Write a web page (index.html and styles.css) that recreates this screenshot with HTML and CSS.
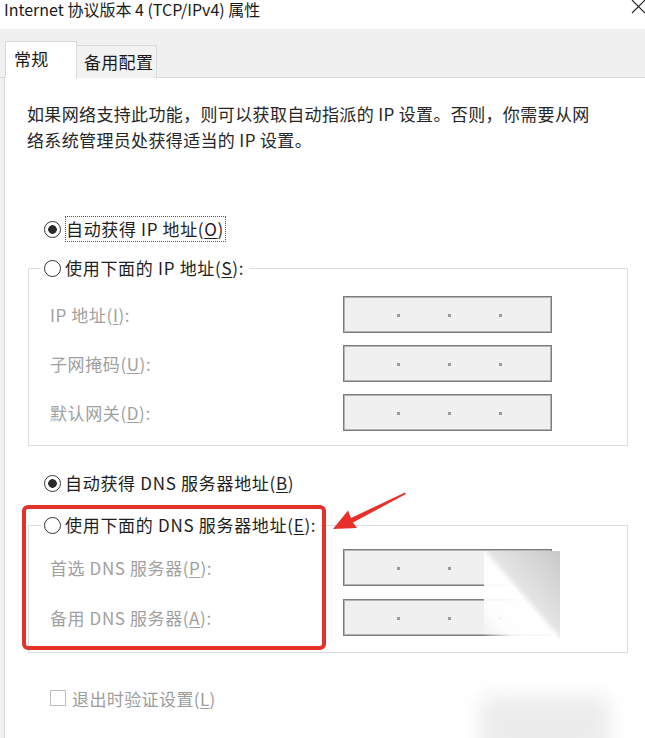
FILE: index.html
```html
<!DOCTYPE html>
<html lang="zh-CN">
<head>
<meta charset="utf-8">
<title>Internet 协议版本 4 (TCP/IPv4) 属性</title>
<link rel="stylesheet" href="styles.css">
</head>
<body>
<div class="titlebar">
  <div class="title">Internet 协议版本 4 (TCP/IPv4) 属性</div>
  <svg class="close" width="14" height="14" viewBox="0 0 14 14"><path d="M1 0 L14 13 M14 0 L1 13" stroke="#222" stroke-width="1.1" fill="none"/></svg>
</div>
<div class="tabstrip">
  <div class="tab active">常规</div>
  <div class="tab">备用配置</div>
</div>
<div class="window">
  <div class="panel">
    <p class="desc">如果网络支持此功能，则可以获取自动指派的 IP 设置。否则，你需要从网<br>络系统管理员处获得适当的 IP 设置。</p>

    <div class="radio-row first">
      <span class="radio checked"></span><span class="focus">自动获得 IP 地址(<u>O</u>)</span>
    </div>

    <fieldset class="group ip">
      <legend class="legend"><span class="radio"></span><span class="lbl">使用下面的 IP 地址(<u>S</u>):</span></legend>
      <div class="field"><span class="flabel">IP 地址(<u>I</u>):</span><span class="ipbox"><i></i><i></i><i></i></span></div>
      <div class="field"><span class="flabel">子网掩码(<u>U</u>):</span><span class="ipbox"><i></i><i></i><i></i></span></div>
      <div class="field"><span class="flabel">默认网关(<u>D</u>):</span><span class="ipbox"><i></i><i></i><i></i></span></div>
    </fieldset>

    <div class="radio-row dns-auto">
      <span class="radio checked"></span><span class="lbl">自动获得 DNS 服务器地址(<u>B</u>)</span>
    </div>

    <fieldset class="group dns">
      <legend class="legend"><span class="radio"></span><span class="lbl">使用下面的 DNS 服务器地址(<u>E</u>):</span></legend>
      <div class="field"><span class="flabel">首选 DNS 服务器(<u>P</u>):</span><span class="ipbox"><i></i><i></i><i></i></span></div>
      <div class="field"><span class="flabel">备用 DNS 服务器(<u>A</u>):</span><span class="ipbox"><i></i><i></i><i></i></span></div>
    </fieldset>

    <div class="check-row">
      <span class="checkbox"></span><span class="clabel">退出时验证设置(<u>L</u>)</span>
    </div>
  </div>
</div>

<div class="highlight"></div>
<svg class="arrow" width="645" height="738" viewBox="0 0 645 738">
  <polygon points="333,529 348,510.5 351,518 405,492.5 406,494 353,522.5 357,528" fill="#e8302a"/>
</svg>
<div class="wm-tri"></div>
<div class="wm-blob"></div>
</body>
</html>
```

FILE: styles.css
```css
* { box-sizing: border-box; }

html, body {
  margin: 0;
  padding: 0;
}

body {
  width: 645px;
  height: 738px;
  overflow: hidden;
  position: relative;
  background: #ffffff;
  font-family: "Noto Sans CJK SC", "Microsoft YaHei", "Noto Sans", sans-serif;
  font-size: 17px;
  color: #1e1e1e;
}

u { text-decoration: underline; text-underline-offset: 2px; }

/* title bar */
.titlebar {
  height: 29px;
  display: flex;
  justify-content: space-between;
  align-items: flex-start;
  background: #ffffff;
}
.title {
  padding-left: 4px;
  font-size: 16px;
  line-height: 19px;
  color: #1a1a1a;
  white-space: nowrap;
}
.close { display: block; }

/* tabs */
.tabstrip {
  height: 49px;
  background: #f0f0f0;
  display: flex;
  align-items: flex-end;
  padding-left: 5px;
  border-bottom: 1px solid #dadada;
}
.tab {
  height: 33px;
  width: 80px;
  margin-bottom: -1px;
  background: #f2f2f2;
  border: 1px solid #dadada;
  border-left: none;
  border-bottom: none;
  padding-left: 7px;
  font-size: 17px;
  line-height: 31px;
  color: #1a1a1a;
  letter-spacing: 0.3px;
}
.tab.active {
  height: 37px;
  width: 72px;
  background: #ffffff;
  border: 1px solid #d9d9d9;
  border-bottom: none;
  padding-left: 8px;
  line-height: 33px;
  position: relative;
  z-index: 1;
}

/* panel */
.window {
  background: #f0f0f0;
  height: 660px;
}
.panel {
  margin-left: 4px;
  height: 100%;
  background: #ffffff;
  border-left: 1px solid #d6d6d6;
  padding: 23px 0 0 22px;
}
.desc {
  margin: 0;
  line-height: 26px;
  color: #262626;
  white-space: nowrap;
  letter-spacing: 0.35px;
}

/* radios */
.radio-row {
  display: flex;
  align-items: center;
  height: 26px;
  padding-left: 17px;
}
.radio-row.first { margin-top: 63px; }
.radio-row.dns-auto { margin-top: 24px; }

.radio {
  flex: none;
  width: 17px;
  height: 17px;
  border-radius: 50%;
  border: 1.5px solid #333333;
  background: #ffffff;
  margin-right: 4px;
}
.radio.checked {
  background: radial-gradient(circle, #2a2a2a 0 4px, #ffffff 4.6px);
}
.focus {
  border: 1px dotted #555555;
  line-height: 24px;
  padding: 0 1px 0 0;
  color: #1e1e1e;
  letter-spacing: 0.65px;
  white-space: nowrap;
}
.lbl {
  color: #1e1e1e;
  line-height: 26px;
  letter-spacing: 0.7px;
  white-space: nowrap;
}

/* group boxes */
.group {
  margin: 13px 0 0 1px;
  width: 600px;
  min-inline-size: 0;
  border: 1px solid #dcdcdc;
  padding: 0 0 14px 12px;
}
.group.dns {
  margin-top: 16px;
  padding-bottom: 16px;
}
.legend {
  display: flex;
  align-items: center;
  height: 26px;
  padding: 0 5px 0 3px;
}

.field {
  display: grid;
  grid-template-columns: 302px 209px;
  align-items: center;
  height: 37px;
  margin-top: 12px;
}
.ip .field:first-of-type { margin-top: 15px; }
.dns .field { margin-top: 13px; }
.dns .field:first-of-type { margin-top: 11px; }

.flabel {
  padding-left: 9px;
  color: #a0a0a0;
  white-space: nowrap;
  letter-spacing: 0.6px;
}
.ipbox {
  height: 37px;
  display: flex;
  align-items: center;
  gap: 48px;
  padding-left: 53px;
  background: #f0f0f0;
  border: 1px solid #7c7c7c;
  box-shadow: inset 0 0 0 1px #b4b4b4;
}
.ipbox i {
  display: block;
  width: 3px;
  height: 3px;
  margin-top: 2px;
  background: #9a9a9a;
}

/* checkbox */
.check-row {
  display: flex;
  align-items: center;
  height: 26px;
  margin-top: 32px;
  padding-left: 23px;
}
.checkbox {
  width: 16px;
  height: 16px;
  border: 1px solid #bdbdbd;
  background: #ffffff;
  margin-right: 6px;
}
.clabel { color: #9c9c9c; letter-spacing: 0.4px; }

/* annotations overlaid on the screenshot */
.highlight {
  position: absolute;
  left: 22px;
  top: 505px;
  width: 304px;
  height: 145px;
  border: 4px solid #e2322b;
  border-radius: 6px;
}
.arrow {
  position: absolute;
  left: 0;
  top: 0;
  pointer-events: none;
}
.wm-tri {
  position: absolute;
  left: 484px;
  top: 551px;
  width: 76px;
  height: 88px;
  background: linear-gradient(to bottom left, #c9c9c9 0%, #e4e4e4 46%, rgba(255,255,255,0.97) 52%, rgba(255,255,255,0.9) 80%, rgba(255,255,255,0) 100%);
}
.wm-blob {
  position: absolute;
  left: 480px;
  top: 696px;
  width: 130px;
  height: 60px;
  background: #ececec;
  filter: blur(10px);
  border-radius: 10px;
}
```
